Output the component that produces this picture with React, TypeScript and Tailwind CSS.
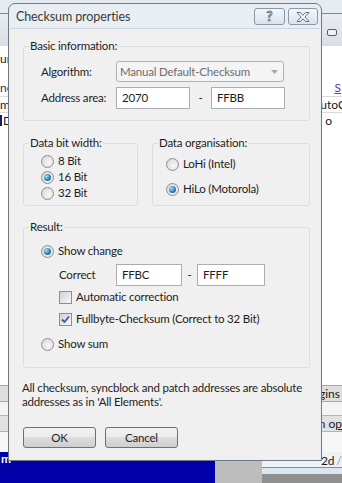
import React from 'react';

const font = "font-['Lato','Noto_Sans',sans-serif]";

function Radio({ checked = false }: { checked?: boolean }) {
  return (
    <span className="flex h-[13px] w-[13px] shrink-0 items-center justify-center rounded-full border border-[#8e8f8f] bg-[radial-gradient(circle_at_60%_60%,#f7f7f7,#d4d4d4)]">
      {checked && (
        <span className="h-[7px] w-[7px] rounded-full bg-[radial-gradient(circle_at_35%_35%,#a6e1f7,#2c7fb4_55%,#134f7e)]" />
      )}
    </span>
  );
}

function Check({ checked = false }: { checked?: boolean }) {
  return (
    <span className="flex h-[13px] w-[13px] shrink-0 items-center justify-center border border-[#8e8f8f] bg-white">
      <span className="flex h-[11px] w-[11px] items-center justify-center bg-gradient-to-br from-[#cfd3d8] to-[#f7f7f7]">
        {checked && (
          <svg width="9" height="9" viewBox="0 0 9 9">
            <path d="M1 4.5 L3.5 7 L8 1.5" fill="none" stroke="#3d5a96" strokeWidth="1.8" />
          </svg>
        )}
      </span>
    </span>
  );
}

function Field({ className, children }: { className: string; children: React.ReactNode }) {
  return (
    <div className={`flex h-[22px] items-center border border-[#abadb3] bg-white pl-[5px] ${className}`}>
      {children}
    </div>
  );
}

function Button({ children }: { children: React.ReactNode }) {
  return (
    <div className="flex h-[21px] w-[73px] items-center justify-center rounded-[3px] border border-[#707070] bg-[linear-gradient(#f2f2f2,#ebebeb_50%,#dddddd_50%,#cfcfcf)] text-[#1e1e1e]">
      {children}
    </div>
  );
}

function TitleBtn({ children, className }: { children: React.ReactNode; className: string }) {
  return (
    <div className={`flex h-[17px] items-center justify-center rounded-[3px] border border-[#8a97a7] bg-gradient-to-b from-[#f5f7fa] to-[#dbe2ea] ${className}`}>
      {children}
    </div>
  );
}

function Row({ children, className = '' }: { children: React.ReactNode; className?: string }) {
  return <div className={`flex h-[16px] items-center gap-[4px] whitespace-nowrap ${className}`}>{children}</div>;
}

function Group({ title, className, children }: { title: string; className: string; children: React.ReactNode }) {
  return (
    <fieldset className={`rounded-[3px] border border-[#d5dfe5] ${className}`}>
      <legend className="ml-[5px] px-[1px] leading-[16px]">{title}</legend>
      {children}
    </fieldset>
  );
}

function Backdrop() {
  return (
    <div className="flex h-full flex-col text-[12px] text-[#1a1a1a]">
      <div className="h-[13px] shrink-0 bg-[#e6ebf1]" />
      <div className="h-px shrink-0 bg-[#7f8893]" />
      <div className="flex h-[32px] shrink-0 justify-end bg-gradient-to-b from-[#e9edf1] to-[#d9dee4] pr-[5px] pt-[15px]">
        <div className="h-[7px] w-[10px] rounded-[2px] border border-[#56606b] bg-[#f0f3f6]" />
      </div>
      <div className="flex flex-1 flex-col bg-white">
        <div className="h-[6px]" />
        <div className="flex h-[14px] items-center leading-none">
          <span>un</span>
        </div>
        <div className="h-[14px]" />
        <div className="flex h-[16px] items-center justify-between leading-none">
          <span className="text-[#3c2a55]">ne</span>
          <span className="mr-[1px] text-[#6a2fb8] underline">S</span>
        </div>
        <div className="flex h-[16px] items-center justify-between overflow-hidden border-t border-[#dadada] leading-none">
          <span>m</span>
          <span className="-mr-[4px]">utoC</span>
        </div>
        <div className="flex h-[16px] items-center justify-between border-t border-[#dadada] leading-none">
          <span className="flex items-center gap-[1px]">
            <span className="h-[11px] w-[2px] bg-[#1a1a60]" />D
          </span>
          <span className="mr-[10px]">o</span>
        </div>
        <div className="flex-1" />
        <div className="flex h-[17px] items-center justify-end border-y border-[#a9a9a9] bg-[#dedede] leading-none">
          <span className="border-l border-[#9a9a9a] pl-[2px] pr-[2px]">gins</span>
        </div>
        <div className="h-[13px] bg-[#f4f4f4]" />
        <div className="flex h-[17px] items-center justify-end border-y border-[#b5b5b5] bg-[#e1e1e1] leading-none">
          <span className="border-l border-[#9a9a9a] pl-[2px]">
            m o<span className="underline">p</span>
          </span>
        </div>
        <div className="h-[20px] bg-[#f7f7f7]" />
      </div>
      <div className="flex h-[31px] shrink-0">
        <div className="w-[216px] bg-[#0000a8] pl-[1px] pt-[1px] text-[12px] font-bold leading-none text-white">m</div>
        <div className="w-[47px] bg-[#bdbdbd]" />
        <div className="flex flex-1 flex-col bg-[#c3c3c3]">
          <div className="flex h-[16px] items-end border-b border-[#8a8a8a] bg-[#eef2f6] pl-[59px] leading-none">
            <span>2d</span>
            <span className="ml-[2px] text-[#9a9a9a]">/</span>
          </div>
          <div className="h-[6px] bg-[#dbe6f1]" />
          <div className="flex-1 bg-[#8f8f8f]" />
        </div>
      </div>
    </div>
  );
}

export default function App() {
  return (
    <div className={`relative h-[483px] w-[342px] overflow-hidden ${font}`}>
      <Backdrop />
      <div className="absolute left-[8px] top-[3px] flex h-[458px] w-[314px] flex-col rounded-t-[7px] border border-[#6f7a86] bg-[#e8eef4] text-[11.5px] tracking-[-0.2px] text-[#1e1e1e]">
        <div className="flex h-[24px] shrink-0 items-start justify-between pl-[7px] pr-[3px]">
          <span className="mt-[5px] text-[12.5px] leading-[16px] tracking-[-0.1px] text-[#3b3b3b]">Checksum properties</span>
          <div className="mt-[4px] flex gap-[3px]">
            <TitleBtn className="w-[31px]">
              <span className="text-[13px] font-bold leading-none text-[#f4f6f8] [-webkit-text-stroke:0.8px_#59636f]">?</span>
            </TitleBtn>
            <TitleBtn className="w-[30px]">
              <svg width="14" height="10" viewBox="0 0 14 10">
                <path
                  d="M1 0.5 H4.5 L7 3.3 L9.5 0.5 H13 L9 5 L13 9.5 H9.5 L7 6.7 L4.5 9.5 H1 L5 5 Z"
                  fill="#f4f6f8"
                  stroke="#59636f"
                  strokeWidth="0.9"
                />
              </svg>
            </TitleBtn>
          </div>
        </div>
        <div className="mx-[1px] mb-[1px] flex flex-1 flex-col border-t border-[#cdd5de] bg-[#f0f0f0] pl-[13px] pr-[10px] pt-[9px]">
          <Group title="Basic information:" className="h-[83px]">
            <div className="pl-[17px]">
              <div className="mt-[7px] flex h-[21px] items-center whitespace-nowrap">
                <span className="w-[75px]">Algorithm:</span>
                <div className="flex h-[21px] w-[168px] items-center justify-between rounded-[3px] border border-[#adb2b5] bg-[#f4f4f4] pl-[3px] pr-[5px] text-[#6d6d6d]">
                  <span>Manual Default-Checksum</span>
                  <svg width="7" height="4" viewBox="0 0 7 4">
                    <path d="M0 0 H7 L3.5 4 Z" fill="#a8a8a8" />
                  </svg>
                </div>
              </div>
              <div className="mt-[5px] flex h-[22px] items-center whitespace-nowrap">
                <span className="w-[75px]">Address area:</span>
                <Field className="w-[74px]">2070</Field>
                <span className="w-[21px] text-center">-</span>
                <Field className="w-[74px]">FFBB</Field>
              </div>
            </div>
          </Group>

          <div className="mt-[14px] flex gap-[14px]">
            <Group title="Data bit width:" className="h-[71px] w-[115px]">
              <div className="pl-[17px]">
                <Row className="mt-[2px]">
                  <Radio />8 Bit
                </Row>
                <Row>
                  <Radio checked />16 Bit
                </Row>
                <Row>
                  <Radio />32 Bit
                </Row>
              </div>
            </Group>
            <Group title="Data organisation:" className="h-[71px] flex-1">
              <div className="pl-[13px]">
                <Row className="mt-[5px]">
                  <Radio />LoHi (Intel)
                </Row>
                <Row className="mt-[9px]">
                  <Radio checked />HiLo (Motorola)
                </Row>
              </div>
            </Group>
          </div>

          <Group title="Result:" className="mt-[13px] h-[149px]">
            <div className="pl-[17px]">
              <Row className="mt-[8px]">
                <Radio checked />Show change
              </Row>
              <div className="mt-[5px] flex h-[22px] items-center pl-[18px]">
                <span className="w-[57px]">Correct</span>
                <Field className="w-[66px]">FFBC</Field>
                <span className="w-[15px] text-center">-</span>
                <Field className="w-[68px]">FFFF</Field>
              </div>
              <Row className="mt-[3px] pl-[18px]">
                <Check />Automatic correction
              </Row>
              <Row className="mt-[6px] pl-[18px]">
                <Check checked />Fullbyte-Checksum (Correct to 32 Bit)
              </Row>
              <Row className="mt-[9px]">
                <Radio />Show sum
              </Row>
            </div>
          </Group>

          <p className="-ml-[1px] mt-[13px] whitespace-nowrap leading-[14px]">
            All checksum, syncblock and patch addresses are absolute
            <br />
            addresses as in 'All Elements'.
          </p>

          <div className="mt-[18px] flex gap-[9px]">
            <Button>OK</Button>
            <Button>Cancel</Button>
          </div>
        </div>
      </div>
    </div>
  );
}
